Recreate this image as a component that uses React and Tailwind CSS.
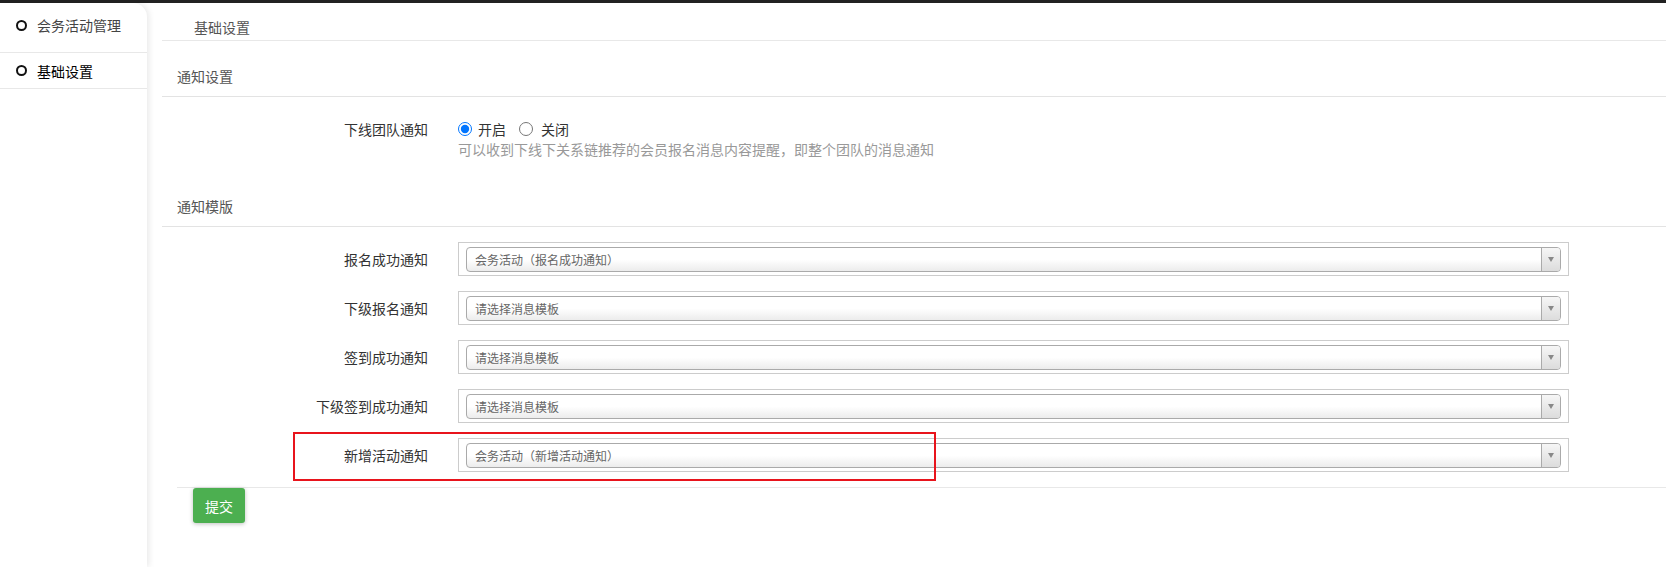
import React, { useState } from 'react';

const templates = [
  { label: '报名成功通知', value: '会务活动（报名成功通知）' },
  { label: '下级报名通知', value: '请选择消息模板' },
  { label: '签到成功通知', value: '请选择消息模板' },
  { label: '下级签到成功通知', value: '请选择消息模板' },
  { label: '新增活动通知', value: '会务活动（新增活动通知）', marked: true },
];

const FakeSelect = ({ value }) => (
  <div className="w-[1111px] h-[34px] border border-[#ccc] px-[7px] pt-[4px] pb-[3px]">
    <div className="h-[25px] flex border border-[#aaa] rounded-[4px] bg-gradient-to-b from-white from-50% to-[#ececec] overflow-hidden">
      <div className="flex-1 pl-[8px] text-[12px] leading-[23px] text-[#666] truncate">{value}</div>
      <div className="w-[19px] border-l border-[#aaa] bg-gradient-to-b from-[#f6f6f6] to-[#dcdcdc] flex items-center justify-center">
        <span className="block w-0 h-0 border-l-[3px] border-r-[3px] border-t-[5px] border-l-transparent border-r-transparent border-t-[#888]" />
      </div>
    </div>
  </div>
);

const App = () => {
  const [team, setTeam] = useState('on');

  return (
    <div className="min-h-[567px] bg-white font-['Noto_Sans_CJK_SC','Noto_Sans',sans-serif] text-[14px] text-[#333]">
      <div className="h-[3px] bg-[#222]" />
      <div className="flex">
        {/* sidebar */}
        <div className="w-[147px] min-h-[564px] shrink-0 bg-white rounded-tr-[14px] shadow-[2px_0_6px_rgba(0,0,0,0.09)]">
          <div className="h-[50px] pt-[12px] pl-[16px] border-b border-[#e8e8e8]">
            <div className="flex items-center h-[20px]">
              <span className="shrink-0 w-[11px] h-[11px] rounded-full border-2 border-[#111]" />
              <span className="ml-[10px] leading-[20px] text-[#444]">会务活动管理</span>
            </div>
          </div>
          <div className="h-[36px] flex items-center pl-[16px] border-b border-[#e8e8e8]">
            <span className="shrink-0 w-[11px] h-[11px] rounded-full border-2 border-[#111]" />
            <span className="ml-[10px] leading-[20px] text-black">基础设置</span>
          </div>
        </div>

        {/* main */}
        <div className="flex-1 ml-[15px]">
          <div className="pt-[14px] pb-[3px] pl-[32px] leading-[20px] text-[#555] border-b border-[#e8e8e8]">基础设置</div>

          <div className="pt-[25px] pb-[10px] pl-[15px] leading-[20px] text-[#555] border-b border-[#e3e3e3]">通知设置</div>

          <div className="flex pt-[22px]">
            <div className="w-[266px] text-right leading-[20px]">下线团队通知</div>
            <div className="ml-[30px]">
              <div className="flex items-center h-[20px]">
                <label className="flex items-center">
                  <input
                    type="radio"
                    name="team"
                    checked={team === 'on'}
                    onChange={() => setTeam('on')}
                    className="m-0 w-[14px] h-[14px] accent-[#0075ff]"
                  />
                  <span className="ml-[6px]">开启</span>
                </label>
                <label className="flex items-center ml-[13px]">
                  <input
                    type="radio"
                    name="team"
                    checked={team === 'off'}
                    onChange={() => setTeam('off')}
                    className="m-0 w-[14px] h-[14px] accent-[#0075ff]"
                  />
                  <span className="ml-[8px]">关闭</span>
                </label>
              </div>
              <div className="leading-[20px] text-[#999]">可以收到下线下关系链推荐的会员报名消息内容提醒，即整个团队的消息通知</div>
            </div>
          </div>

          <div className="mt-[37px] pb-[10px] pl-[15px] leading-[20px] text-[#555] border-b border-[#e3e3e3]">通知模版</div>

          <div className="pt-[15px] flex flex-col gap-[15px]">
            {templates.map((t) => (
              <div key={t.label} className="relative flex items-center">
                <div className="w-[266px] text-right leading-[20px]">{t.label}</div>
                <div className="ml-[30px]">
                  <FakeSelect value={t.value} />
                </div>
                {t.marked && (
                  <div className="absolute left-[131px] top-[-6px] w-[643px] h-[49px] border-2 border-[#e8141c] pointer-events-none" />
                )}
              </div>
            ))}
          </div>

          <div className="mt-[15px] ml-[15px] border-t border-[#e8e8e8] pl-[16px]">
            <button className="w-[52px] h-[35px] bg-[#4caf50] text-white rounded-[3px] shadow-[0_1px_4px_rgba(0,0,0,0.25)] leading-[20px]">
              提交
            </button>
          </div>
        </div>
      </div>
    </div>
  );
};

export default App;
